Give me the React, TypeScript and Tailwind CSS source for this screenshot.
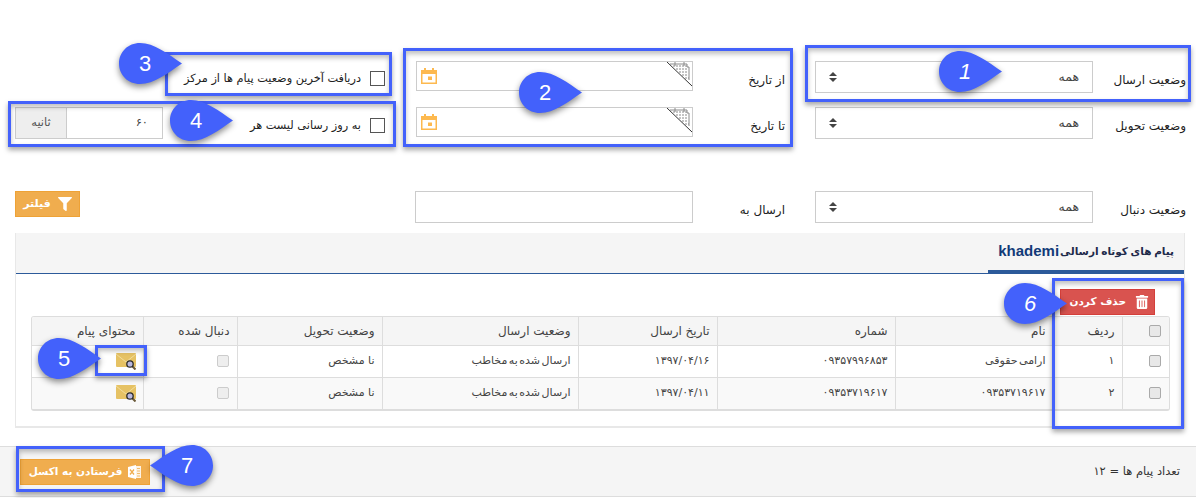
import { FaFilter, FaTrashAlt } from "react-icons/fa";

const FA = "font-['DejaVu_Sans',sans-serif]";

function CalendarIcon() {
  return (
    <svg width="16" height="16" viewBox="0 0 16 16" className="shrink-0">
      <path d="M0 2H3V0H5V2H11V0H13V2H16V16H0ZM1.5 6V14.5H14.5V6Z" fill="#fdb94f" fillRule="evenodd" />
      <rect x="7" y="8.500" width="4" height="3.500" fill="#fdb94f" />
    </svg>
  );
}

function CornerMark() {
  return (
    <svg width="25" height="25" viewBox="0 0 25 25" className="absolute right-0 top-0">
      <g stroke="#8a8a8a" strokeWidth="1" fill="none">
        <path d="M3 2H20V5H22V18" />
        <path d="M6 4H20M9 7H21M12 10H21M15 13H21M18 16H22" strokeDasharray="2 1" />
        <path d="M8 0V4M17 0V4" />
      </g>
      <path d="M0 0L25 24" stroke="#333" strokeWidth="1" />
    </svg>
  );
}

function Updown() {
  return (
    <svg width="8" height="10" viewBox="0 0 8 10">
      <path d="M4 0L8 4H0ZM0 6H8L4 10Z" fill="#444" />
    </svg>
  );
}

function SelectBox() {
  return (
    <div className="flex h-[32px] w-[278px] items-center justify-between border border-[#ccc] bg-white pl-[13px] pr-[13px] text-[12.5px] text-[#444]">
      <span>همه</span>
      <Updown />
    </div>
  );
}

function DateInput() {
  return (
    <div className="relative flex h-[30px] w-[277px] items-center justify-end border border-[#ccc] bg-white pl-[4px]">
      <CornerMark />
      <CalendarIcon />
    </div>
  );
}

function Label({ children, w }: { children: React.ReactNode; w: string }) {
  return <div className={`${w} flex shrink-0 items-center pt-[6px] text-[12px] text-[#222]`}>{children}</div>;
}

function Box({ disabled }: { disabled?: boolean }) {
  return (
    <span
      className={
        disabled
          ? "mr-px block size-[12px] rounded-[2px] border border-[#ccc] bg-[#eee]"
          : "mr-px block size-[12px] rounded-[2px] border border-[#aaa] bg-[#e8e8e8]"
      }
    />
  );
}

function MailSearch() {
  return (
    <svg width="20" height="17" viewBox="0 0 20 17" className="block">
      <path d="M1 0H19Q20 0 20 1V13Q20 14 19 14H1Q0 14 0 13V1Q0 0 1 0Z" fill="#e6c264" />
      <path d="M0 1L10 9L20 1" stroke="#f1dc9c" strokeWidth="1" fill="none" />
      <path d="M16.500 13.500L19.500 16.500" stroke="#6b5a3a" strokeWidth="2" />
      <circle cx="14" cy="11" r="3.200" fill="#b9b8de" stroke="#2b2b2b" strokeWidth="1.300" />
    </svg>
  );
}

function ExcelIcon() {
  return (
    <svg width="13" height="14" viewBox="0 0 13 14" className="shrink-0">
      <path d="M7 1H13V13H7Z" fill="#fff" opacity="0.85" />
      <path d="M0 2L8 0V14L0 12Z" fill="#fff" />
      <path d="M2 4.500L6 9.500M6 4.500L2 9.500" stroke="#f0ad4e" strokeWidth="1.300" />
      <path d="M9 3.500H12M9 6H12M9 8.500H12M9 11H12" stroke="#f0ad4e" strokeWidth="0.800" />
    </svg>
  );
}

const rows = [
  { n: "۱", name: "ارامی حقوقی", digits: false, phone: "۰۹۳۵۷۹۹۶۸۵۳", date: "۱۳۹۷/۰۴/۱۶", bg: "bg-white" },
  { n: "۲", name: "۰۹۳۵۳۷۱۹۶۱۷", digits: true, phone: "۰۹۳۵۳۷۱۹۶۱۷", date: "۱۳۹۷/۰۴/۱۱", bg: "bg-[#f9f9f9]" },
];

const th = "h-[28px] border-l border-[#ddd] px-[7px] text-right text-[12px] font-normal text-[#444] last:border-l-0";
const td = "h-[32px] border-l border-t border-[#ddd] px-[7px] text-right text-[11px] text-[#444] last:border-l-0";
const num = "tracking-[1px]";
const tight = "[word-spacing:-2px]";

function Table() {
  return (
    <div className="ml-[15px] mr-[14px] overflow-hidden rounded-[3px] border border-b-[2px] border-[#ddd]">
      <table className="w-[1137px] table-fixed border-collapse">
        <colgroup>
          <col className="w-[47px]" />
          <col className="w-[69px]" />
          <col className="w-[158px]" />
          <col className="w-[178px]" />
          <col className="w-[139px]" />
          <col className="w-[196px]" />
          <col className="w-[145px]" />
          <col className="w-[94px]" />
          <col className="w-[111px]" />
        </colgroup>
        <thead>
          <tr className="border-b border-[#e0693a] bg-[#f5f5f5]">
            <th className={th}><Box /></th>
            <th className={th}>ردیف</th>
            <th className={th}>نام</th>
            <th className={th}>شماره</th>
            <th className={th}>تاریخ ارسال</th>
            <th className={th}>وضعیت ارسال</th>
            <th className={th}>وضعیت تحویل</th>
            <th className={th}>دنبال شده</th>
            <th className={th}>محتوای پیام</th>
          </tr>
        </thead>
        <tbody>
          {rows.map((r) => (
            <tr key={r.n} className={r.bg}>
              <td className={td}><Box /></td>
              <td className={td}>{r.n}</td>
              <td className={td}><span className={r.digits ? num : tight}>{r.name}</span></td>
              <td className={td}><span className={num}>{r.phone}</span></td>
              <td className={td}><span className={num}>{r.date}</span></td>
              <td className={td}><span className={tight}>ارسال شده به مخاطب</span></td>
              <td className={td}>نا مشخص</td>
              <td className={td}><Box disabled /></td>
              <td className={td}><MailSearch /></td>
            </tr>
          ))}
        </tbody>
      </table>
    </div>
  );
}

const frames = [
  "left-[805px] top-[45px] w-[386px] h-[57px]",
  "left-[403px] top-[48px] w-[390px] h-[99px]",
  "left-[165px] top-[52px] w-[227px] h-[44px]",
  "left-[8px] top-[101px] w-[388px] h-[46px]",
  "left-[95px] top-[345px] w-[52px] h-[31px]",
  "left-[1052px] top-[278px] w-[132px] h-[151px]",
  "left-[16px] top-[446px] w-[149px] h-[46px]",
];

const pins = [
  { t: "1", c: "left-[939px] top-[51px]", it: true },
  { t: "2", c: "left-[519px] top-[72px]" },
  { t: "3", c: "left-[119px] top-[43px]" },
  { t: "4", c: "left-[170px] top-[100px]" },
  { t: "5", c: "left-[38px] top-[338px]" },
  { t: "6", c: "left-[1004px] top-[283px]", it: true },
];

function Drop({ flip }: { flip?: boolean }) {
  return (
    <svg
      width="63"
      height="41"
      viewBox="0 0 63 41"
      className={`absolute inset-0 overflow-visible drop-shadow-[0_3px_3px_rgba(0,0,0,0.45)] ${flip ? "-scale-x-100" : ""}`}
    >
      <path d="M21 0C35 0 49 11 63 20.500C49 30 35 41 21 41C9 41 0 32 0 20.500C0 9 9 0 21 0Z" fill="#4361fb" />
    </svg>
  );
}

export default function App() {
  return (
    <div dir="rtl" className={`relative h-[498px] w-[1196px] overflow-hidden bg-white pt-[61px] ${FA}`}>
      {/* form */}
      <div className="flex h-[32px] pr-[10px]">
        <Label w="w-[93px]">وضعیت ارسال</Label>
        <SelectBox />
        <Label w="w-[122px] pr-[30px]">از تاریخ</Label>
        <DateInput />
        <label className="mr-[31px] flex h-[30px] items-center gap-[9px] pt-[5px] text-[11.3px] text-[#222]">
          <span className="size-[15px] border border-[#555] bg-white" />
          <span className="pt-[2px]">دریافت آخرین وضعیت پیام ها از مرکز</span>
        </label>
      </div>
      <div className="mt-[14px] flex h-[32px] pr-[10px]">
        <Label w="w-[93px]">وضعیت تحویل</Label>
        <SelectBox />
        <Label w="w-[122px] pr-[30px]">تا تاریخ</Label>
        <DateInput />
        <label className="mr-[31px] flex w-[370px] items-center text-[11.3px] text-[#222]">
          <span className="mt-[4px] size-[15px] shrink-0 border border-[#555] bg-white" />
          <span className="mr-[9px] flex-1 pt-[6px]">به روز رسانی لیست هر</span>
          <span className="flex h-[32px] w-[148px] border border-[#ccc] text-[11.5px]">
            <span className="flex flex-1 items-center bg-white pr-[14px] tracking-[1.5px] text-[#444]">۶۰</span>
            <span className="flex w-[51px] items-center justify-center border-r border-[#ccc] bg-[#eee] text-[#555]">ثانیه</span>
          </span>
        </label>
      </div>
      <div className="mt-[52px] flex h-[32px] pr-[10px]">
        <Label w="w-[93px]">وضعیت دنبال</Label>
        <SelectBox />
        <Label w="w-[122px] pr-[30px]">ارسال به</Label>
        <div className="h-[32px] w-[278px] border border-[#ccc] bg-white" />
        <div className="mr-[335px]">
          <button className="flex h-[26px] w-[65px] items-center justify-center gap-[7px] border border-[#eea236] bg-[#f0ad4e] text-[11px] font-bold text-white">
            <FaFilter className="size-[14px]" />
            فیلتر
          </button>
        </div>
      </div>

      {/* panel */}
      <div className="ml-[15px] mr-[11px] mt-[10px] border-b-[2px] border-l border-r border-[#e8e8e8] bg-white pb-[15px]">
        <div className="flex h-[41px] border-b border-[#2c5a9a] bg-[#f5f5f5]">
          <div className="-mb-px flex w-[196px] items-center gap-[1px] whitespace-nowrap border-b-[4px] border-[#2c5a9a] pr-[10px] text-[10.5px] font-bold text-[#1e2a4a]">
            <span className="[word-spacing:-1px]">پیام های کوتاه ارسالی</span>
            <span className="font-['Liberation_Sans'] text-[15px] text-[#123a78]">khademi</span>
          </div>
        </div>
        <div className="pr-[29px] pt-[15px]">
          <button className="flex h-[26px] w-[95px] items-center gap-[9px] border border-[#d43f3a] bg-[#d9534f] pr-[5px] text-[10.5px] font-bold text-white">
            <FaTrashAlt className="size-[14px]" />
            حذف کردن
          </button>
        </div>
        <div className="pt-px">
          <Table />
        </div>
      </div>

      {/* footer */}
      <div className="absolute bottom-[1px] left-0 right-0 flex h-[51px] items-center justify-between border-y border-[#ddd] bg-[#f5f5f5] pl-[20px] pr-[16px] text-[11.5px] text-[#333]">
        <span>تعداد پیام ها = ۱۲</span>
        <button className="flex h-[26px] w-[130px] items-center justify-center gap-[6px] border border-[#eea236] bg-[#f0ad4e] text-[10.5px] font-bold text-white">
          <ExcelIcon />
          فرستادن به اکسل
        </button>
      </div>

      {/* annotations */}
      {frames.map((f) => (
        <div
          key={f}
          className={`pointer-events-none absolute border-[3px] border-[#4361fb] shadow-[0_3px_5px_rgba(0,0,0,0.35),inset_0_3px_5px_rgba(0,0,0,0.25)] ${f}`}
        />
      ))}
      {pins.map((p) => (
        <div key={p.t} dir="ltr" className={`absolute h-[41px] w-[63px] ${p.c}`}>
          <Drop />
          <span
            className={`absolute left-0 top-0 flex h-[41px] w-[52px] items-center justify-center font-['Liberation_Sans'] text-[22px] text-white ${p.it ? "italic" : ""}`}
          >
            {p.t}
          </span>
        </div>
      ))}
      <div dir="ltr" className="absolute left-[150px] top-[445px] h-[41px] w-[63px]">
        <Drop flip />
        <span className="absolute left-[11px] top-0 flex h-[41px] w-[52px] items-center justify-center font-['Liberation_Sans'] text-[22px] text-white">
          7
        </span>
      </div>
    </div>
  );
}
